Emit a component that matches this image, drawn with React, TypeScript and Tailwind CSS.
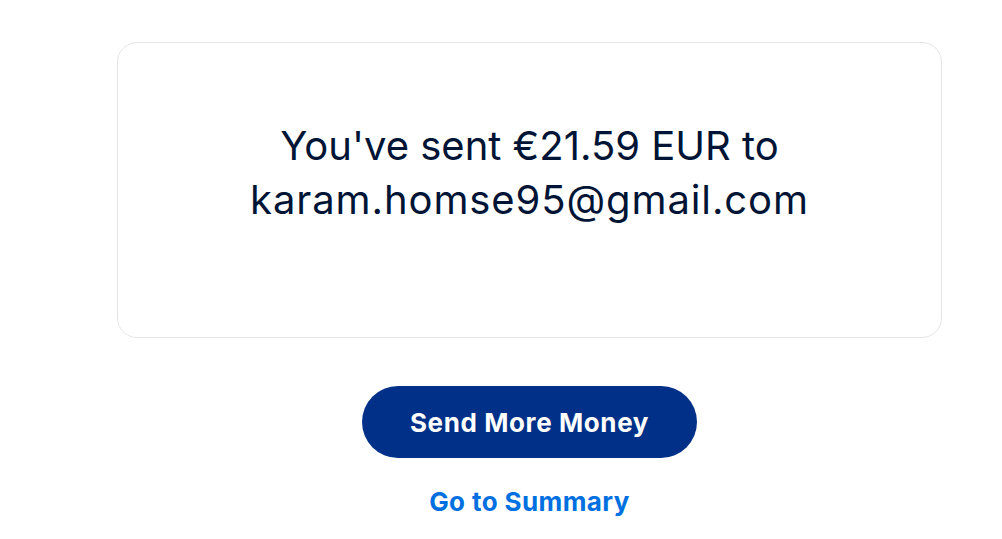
export default function App() {
  return (
    <div className="min-h-[539px] w-full bg-white font-['Inter','Liberation_Sans',sans-serif]">
      <div className="ml-[117px] flex w-[825px] flex-col items-center pt-[42px]">
        {/* Confirmation card */}
        <div className="flex h-[296px] w-full flex-col items-center rounded-[20px] border border-[#e6e6e6] pt-[76px]">
          <h1 className="text-center text-[40px] font-normal leading-[54px] text-[#001435]">
            You've sent €21.59 EUR to
            <br />
            <span className="tracking-[0.9px]">karam.homse95@gmail.com</span>
          </h1>
        </div>

        <button className="mt-[48px] h-[72px] w-[335px] rounded-full bg-[#003087] text-[26px] font-bold tracking-[0.6px] text-white">
          Send More Money
        </button>

        <a href="#" className="mt-[24px] text-[26px] font-bold tracking-[0.4px] text-[#0070e0]">
          Go to Summary
        </a>
      </div>
    </div>
  );
}
